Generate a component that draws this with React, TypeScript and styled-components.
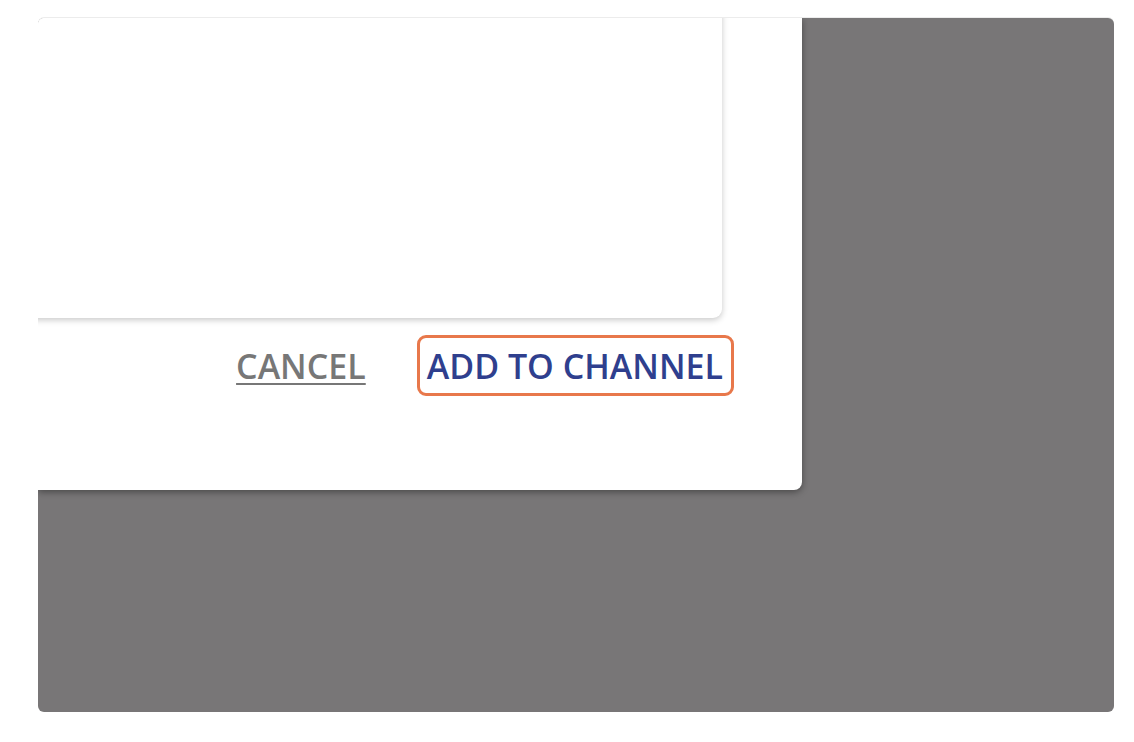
import React from "react";
import styled, { createGlobalStyle } from "styled-components";

const Global = createGlobalStyle`
  html, body { margin: 0; padding: 0; background: #ffffff; }
  body { font-family: "Open Sans", "Liberation Sans", sans-serif; }
`;

const Page = styled.div`
  width: 1134px;
  height: 742px;
  padding: 18px 20px 30px 38px;
  box-sizing: border-box;
`;

const Frame = styled.div`
  width: 1076px;
  height: 694px;
  border-radius: 6px;
  overflow: hidden;
  background: #787677;
  box-shadow: 0 -1px 0 #ececec;
`;

const Dialog = styled.div`
  width: 764px;
  height: 472px;
  background: #ffffff;
  border-radius: 0 0 8px 0;
  box-shadow: 0 2px 7px rgba(0, 0, 0, 0.4);
  display: flex;
  flex-direction: column;
  padding-right: 80px;
  box-sizing: border-box;
`;

const Card = styled.div`
  height: 320px;
  margin-top: -20px;
  margin-left: -20px;
  background: #ffffff;
  border-radius: 9px;
  box-shadow: 0 2px 6px rgba(0, 0, 0, 0.22);
`;

const Actions = styled.div`
  display: flex;
  justify-content: flex-end;
  align-items: center;
  gap: 51px;
  margin-top: 17px;
  margin-right: -12px;
`;

const TextButton = styled.button<{ $primary?: boolean }>`
  font-family: "Open Sans", "Liberation Sans", sans-serif;
  font-weight: 600;
  font-size: 34px;
  line-height: 1;
  letter-spacing: 0;
  background: transparent;
  cursor: pointer;
  color: ${(p) => (p.$primary ? "#2f3f8e" : "#777777")};
  text-decoration: ${(p) => (p.$primary ? "none" : "underline")};
  text-decoration-thickness: 2px;
  text-underline-offset: 4px;
  border: ${(p) => (p.$primary ? "3px solid #e8784b" : "none")};
  border-radius: 9px;
  height: ${(p) => (p.$primary ? "61px" : "auto")};
  padding: ${(p) => (p.$primary ? "0 8px 0 7px" : "0")};
  box-sizing: border-box;
  display: flex;
  align-items: center;
`;

export default function App() {
  return (
    <>
      <Global />
      <Page>
        <Frame>
          <Dialog>
            <Card />
            <Actions>
              <TextButton>CANCEL</TextButton>
              <TextButton $primary>ADD TO CHANNEL</TextButton>
            </Actions>
          </Dialog>
        </Frame>
      </Page>
    </>
  );
}
